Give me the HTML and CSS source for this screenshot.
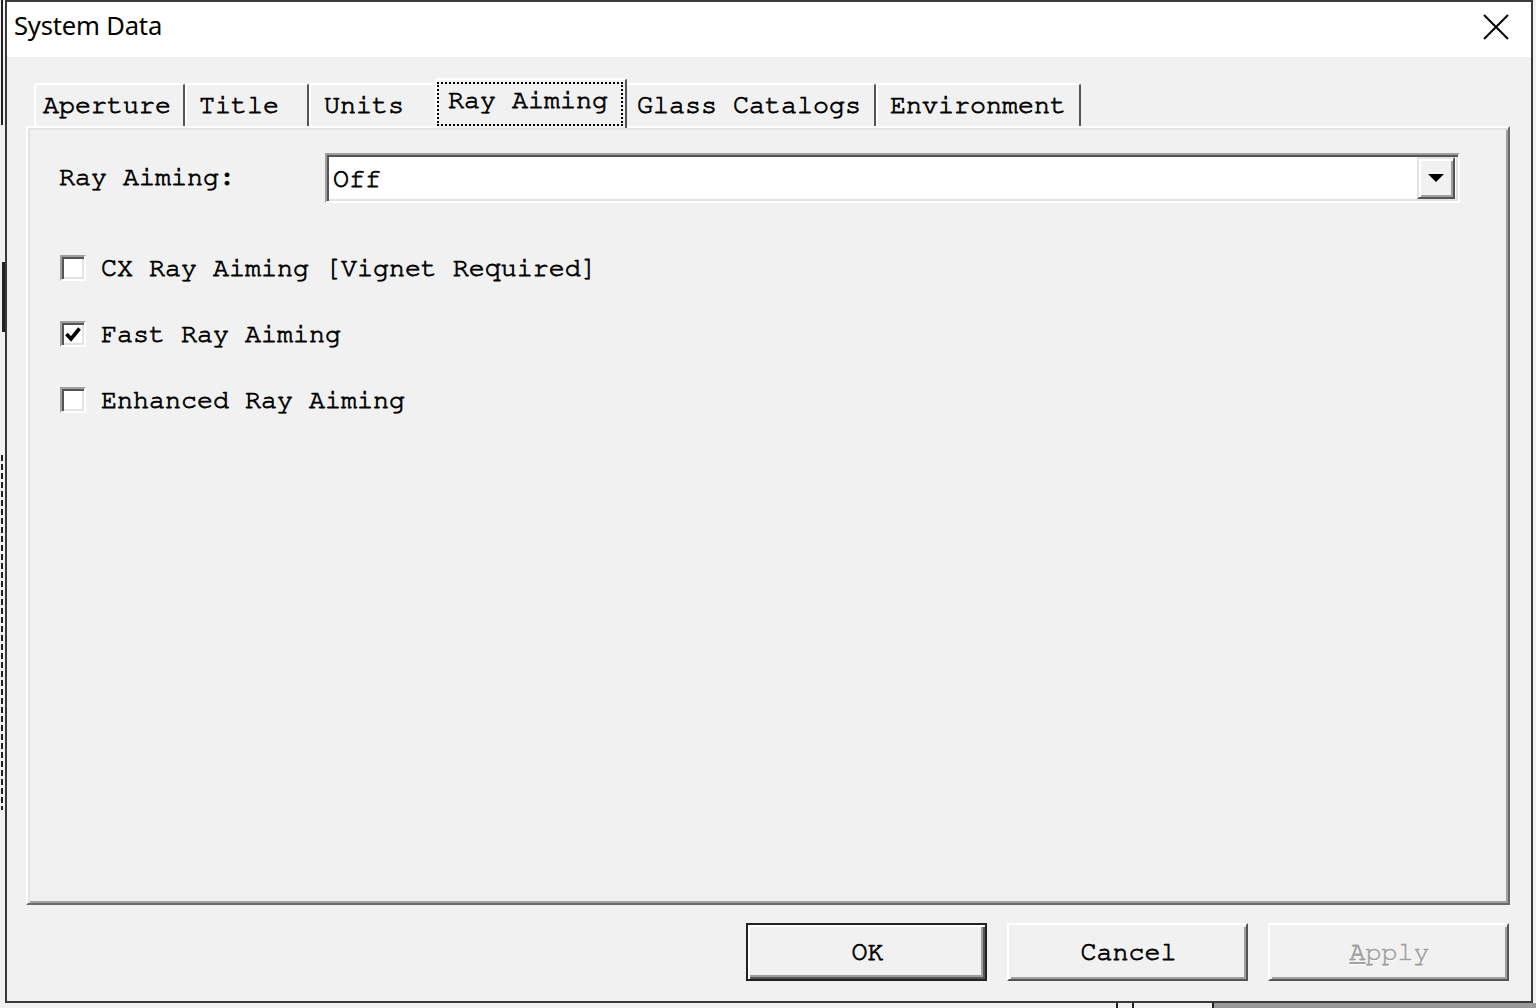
FILE: index.html
```html
<!DOCTYPE html>
<html>
<head>
<meta charset="utf-8">
<title>System Data</title>
<link rel="stylesheet" href="styles.css">
</head>
<body>
<div class="desktop">
  <div class="bg-left">
    <span class="seg seg-a"></span>
    <span class="seg seg-b"></span>
    <span class="seg seg-c"></span>
  </div>
  <div class="dialog">
    <div class="titlebar">
      <span class="title">System Data</span>
      <svg class="close" width="26" height="26" viewBox="0 0 26 26">
        <path d="M1 1 L25 25 M25 1 L1 25" stroke="#000" stroke-width="2" fill="none"/>
      </svg>
    </div>
    <div class="client">
      <div class="tabs">
        <div class="tab tab-aperture">Aperture</div>
        <div class="tab tab-title">Title</div>
        <div class="tab tab-units">Units</div>
        <div class="tab tab-ray selected"><span class="focus">Ray Aiming</span></div>
        <div class="tab tab-glass">Glass Catalogs</div>
        <div class="tab tab-env">Environment</div>
      </div>
      <div class="panel">
        <div class="row-combo">
          <span class="label">Ray Aiming:</span>
          <div class="combo">
            <span class="combo-value">Off</span>
            <span class="drop">
              <svg width="16" height="10" viewBox="0 0 16 10"><path d="M0 1 H16 L8 9 Z" fill="#000"/></svg>
            </span>
          </div>
        </div>
        <div class="checks">
          <label class="check"><span class="box"></span><span>CX Ray Aiming [Vignet Required]</span></label>
          <label class="check"><span class="box checked">
            <svg width="18" height="18" viewBox="0 0 18 18"><path d="M2.5 8 L7 13 L15.5 2.5" stroke="#000" stroke-width="3.6" fill="none"/></svg>
          </span><span>Fast Ray Aiming</span></label>
          <label class="check"><span class="box"></span><span>Enhanced Ray Aiming</span></label>
        </div>
      </div>
      <div class="buttons">
        <button class="btn default">OK</button>
        <button class="btn">Cancel</button>
        <button class="btn disabled"><u>A</u>pply</button>
      </div>
    </div>
  </div>
</div>
<div class="bg-bottom">
  <span class="b-line b1"></span>
  <span class="b-line b2"></span>
  <span class="b-grey"></span>
</div>
</body>
</html>
```

FILE: styles.css
```css
* { box-sizing: border-box; }

html, body {
  margin: 0;
  padding: 0;
}

body {
  width: 1536px;
  height: 1008px;
  overflow: hidden;
  background: #f1f1f1;
  font-family: "Nimbus Mono PS", "Nimbus Mono L", "FreeMono", "Courier 10 Pitch", "Courier", "Liberation Mono", monospace;
  font-size: 26.67px;
  color: #000;
  -webkit-text-stroke: 0.8px currentColor;
  position: relative;
}

.desktop {
  display: flex;
  height: 1003px;
}

.bg-left {
  width: 5px;
  position: relative;
  background: #f1f1f1;
}

.seg {
  position: absolute;
  left: 1px;
  width: 2px;
  background: #222;
}
.seg-a { top: 0; height: 125px; }
.seg-b { top: 262px; height: 70px; left: 2px; width: 3px; }
.seg-c { top: 455px; height: 355px; background: repeating-linear-gradient(#222 0 6px, transparent 6px 9px); }

.dialog {
  width: 1528px;
  height: 1003px;
  border: 2px solid #3a3a3a;
  display: flex;
  flex-direction: column;
  background: #f1f1f1;
}

.titlebar {
  height: 55px;
  background: #fff;
  display: flex;
  align-items: center;
  justify-content: space-between;
  padding: 0 22px 0 7px;
}

.title {
  font-family: "Noto Sans", "Open Sans", sans-serif;
  font-size: 25.6px;
  letter-spacing: -0.2px;
  margin-top: -8px;
  -webkit-text-stroke: 0;
}

.close {
  margin-top: -6px;
}

.client {
  flex: 1;
  padding: 21px 0 0 19px;
  display: flex;
  flex-direction: column;
}

.tabs {
  display: flex;
  align-items: flex-end;
  height: 48px;
  padding-left: 8px;
}

.tab {
  height: 43px;
  padding: 6px 0 0 7px;
  border-top: 2px solid #fff;
  border-left: 2px solid #fff;
  border-right: 2px solid #555;
  border-radius: 3px 3px 0 0;
  white-space: nowrap;
  line-height: 28px;
}

.tab-aperture { width: 151px; }
.tab-title { width: 124px; padding-left: 12px; }
.tab-units { width: 128px; padding-left: 13px; }
.tab-glass { width: 251px; padding-left: 10px; border-left-color: transparent; }
.tab-env { width: 205px; padding-left: 12px; }

.tab.selected {
  width: 192px;
  height: 50px;
  margin: 0 -2px -2px -2px;
  padding: 2px 0 0 0;
  position: relative;
  z-index: 1;
  background: #f1f1f1;
}

.focus {
  display: block;
  margin: 0 2px 0 0;
  height: 44px;
  border: 2px dotted #000;
  -webkit-text-stroke: 0.8px #000;
  padding: 2px 0 0 9px;
  line-height: 28px;
}

.panel {
  width: 1484px;
  height: 779px;
  border-top: 2px solid #fff;
  border-left: 2px solid #fff;
  border-right: 2px solid #696969;
  border-bottom: 2px solid #696969;
  box-shadow: inset 2px 2px 0 #e3e3e3, inset -2px -2px 0 #a0a0a0;
  padding: 25px 0 0 31px;
}

.row-combo {
  display: flex;
  align-items: center;
}

.label {
  width: 266px;
  margin-top: -2px;
}

.combo {
  width: 1135px;
  height: 50px;
  background: #fff;
  border-top: 2px solid #a0a0a0;
  border-left: 2px solid #a0a0a0;
  border-right: 2px solid #fff;
  border-bottom: 2px solid #fff;
  box-shadow: inset 2px 2px 0 #555, inset -2px -2px 0 #e3e3e3;
  display: flex;
  align-items: center;
  justify-content: space-between;
  padding: 2px 3px 2px 6px;
}

.combo-value {
  margin-top: 2px;
}

.drop {
  width: 38px;
  height: 42px;
  background: #f1f1f1;
  border-top: 2px solid #e3e3e3;
  border-left: 2px solid #e3e3e3;
  border-right: 2px solid #555;
  border-bottom: 2px solid #555;
  box-shadow: inset 2px 2px 0 #fff, inset -2px -2px 0 #a0a0a0;
  display: flex;
  align-items: center;
  justify-content: center;
}

.checks {
  display: flex;
  flex-direction: column;
  gap: 40px;
  margin-top: 52px;
  padding-left: 1px;
}

.check {
  display: flex;
  align-items: center;
  gap: 15px;
  height: 26px;
}

.check > span:last-child {
  margin-top: -1px;
}

.box {
  width: 26px;
  height: 26px;
  background: #fff;
  border-top: 2px solid #a0a0a0;
  border-left: 2px solid #a0a0a0;
  border-right: 2px solid #fff;
  border-bottom: 2px solid #fff;
  box-shadow: inset 2px 2px 0 #555, inset -2px -2px 0 #e3e3e3;
  display: flex;
  align-items: center;
  justify-content: center;
}

.box svg { margin-top: 1px; }

.buttons {
  width: 1484px;
  display: flex;
  justify-content: flex-end;
  gap: 20px;
  margin-top: 18px;
  padding-right: 1px;
}

.btn {
  width: 241px;
  height: 58px;
  font-family: "Nimbus Mono PS", "Nimbus Mono L", "FreeMono", "Courier 10 Pitch", "Courier", "Liberation Mono", monospace;
  font-size: 26.67px;
  color: #000;
  -webkit-text-stroke: 0.8px currentColor;
  background: #f1f1f1;
  border-top: 2px solid #fff;
  border-left: 2px solid #fff;
  border-right: 2px solid #555;
  border-bottom: 2px solid #555;
  box-shadow: inset 2px 2px 0 #f1f1f1, inset -2px -2px 0 #a0a0a0;
  padding: 0 0 0 2px;
  margin: 0;
}

.btn.default {
  border: 2px solid #222;
  box-shadow: inset 2px 2px 0 #fff, inset -2px -2px 0 #555, inset -4px -4px 0 #a0a0a0;
}

.btn.disabled {
  color: #a0a0a0;
  -webkit-text-stroke: 0.5px #a0a0a0;
  text-shadow: 1px 1px 0 #fff;
}

.bg-bottom {
  height: 5px;
  position: relative;
  background: #f1f1f1;
}

.b-line {
  position: absolute;
  top: 0;
  width: 2px;
  height: 5px;
  background: #222;
}
.b1 { left: 1116px; }
.b2 { left: 1132px; }
.b-grey {
  position: absolute;
  top: 0;
  left: 1212px;
  right: 0;
  height: 5px;
  background: #9a9a9a;
  border-left: 2px solid #222;
}
```
